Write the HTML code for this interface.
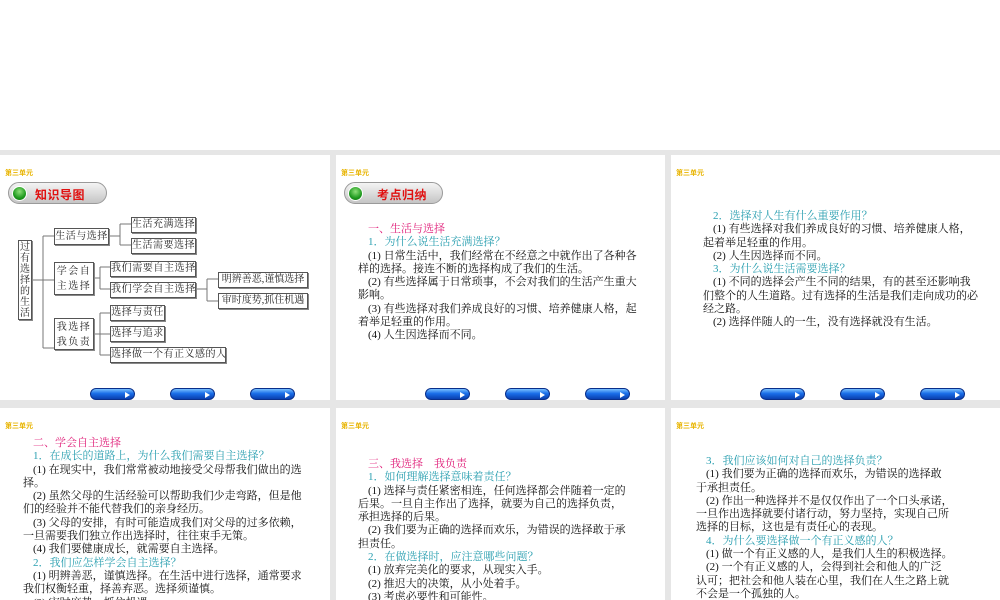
<!DOCTYPE html>
<html><head><meta charset="utf-8"><style>
*{margin:0;padding:0;box-sizing:border-box}
body{width:1000px;height:600px;background:#e6e6e6;position:relative;overflow:hidden;font-family:"Liberation Serif","Noto Serif CJK SC",serif}
.top{position:absolute;left:0;top:0;width:1000px;height:150px;background:#fff}
.s{position:absolute;background:#fff;overflow:hidden}
.u{position:absolute;left:5px;top:13px;font-size:7px;color:#e8b400;font-family:"Liberation Sans","Noto Sans CJK SC",sans-serif;font-weight:bold}
.pill{position:absolute;left:8px;top:27px;width:99px;height:22px;border-radius:11px;border:1px solid #9a9a9a;background:linear-gradient(#f4f4f4,#d8d8d8 60%,#c4c4c4)}
.pill i{position:absolute;left:3px;top:3px;width:15px;height:15px;border-radius:50%;background:radial-gradient(circle at 50% 35%,#8fe07a,#1f9a1f 60%,#0b6a0b);border:1px solid #fff}
.pill b{position:absolute;left:26px;top:3px;font-size:12px;color:#e01010;font-family:"Liberation Sans","Noto Sans CJK SC",sans-serif;letter-spacing:0.5px}
.btn{position:absolute;top:233px;width:45px;height:12px;border-radius:6px;background:linear-gradient(#7ac0ff,#1a6ee8 45%,#0a3fae);border:1px solid #0a2f8a}
.btn:after{content:"";position:absolute;right:4px;top:3px;border-left:5px solid #fff;border-top:3px solid transparent;border-bottom:3px solid transparent}
.t{position:absolute;font-size:11px;line-height:13.3px;color:#111;white-space:nowrap}
.pk{color:#e0207a}.tl{color:#2a9fb0}
.in{padding-left:10px}
.bx{position:absolute;border:1px solid #555;font-size:10px;line-height:14px;color:#222;text-align:center;white-space:nowrap;box-shadow:1px 1px 0 #888;letter-spacing:0.5px;background:#fff;overflow:hidden}
</style></head><body>
<div class="top"></div>

<!-- slide 1 -->
<div class="s" style="left:0;top:155px;width:330px;height:245px">
<div class="u">第三单元</div>
<div class="pill"><i></i><b>知识导图</b></div>
<svg style="position:absolute;left:0;top:0" width="330" height="245" stroke="#777" fill="none" stroke-width="1">
<path d="M32 125H43M43 81V193M43 81H54M43 125H54M43 193H54"/>
<path d="M109 81H120M120 69V90M120 69H131M120 90H131"/>
<path d="M94 123H100M100 112V134M100 112H110M100 134H110"/>
<path d="M196 134H207M207 124V146M207 124H218M207 146H218"/>
<path d="M94 179H100M100 158V200M100 158H110M100 179H110M100 200H110"/>
</svg>
<div class="bx" style="left:18px;top:85px;width:14px;height:80px;line-height:11px;letter-spacing:0;padding-top:1px">过<br>有<br>选<br>择<br>的<br>生<br>活</div>
<div class="bx" style="left:54px;top:73px;width:55px;height:17px;line-height:15px">生活与选择</div>
<div class="bx" style="left:131px;top:62px;width:65px;height:16px">生活充满选择</div>
<div class="bx" style="left:131px;top:83px;width:65px;height:16px">生活需要选择</div>
<div class="bx" style="left:54px;top:107px;width:40px;height:33px;line-height:15px;padding-top:1px;letter-spacing:1.5px">学会自<br>主选择</div>
<div class="bx" style="left:110px;top:106px;width:86px;height:16px;letter-spacing:0.6px">我们需要自主选择</div>
<div class="bx" style="left:110px;top:127px;width:86px;height:16px;letter-spacing:0.6px">我们学会自主选择</div>
<div class="bx" style="left:218px;top:117px;width:90px;height:16px;letter-spacing:0">明辨善恶,谨慎选择</div>
<div class="bx" style="left:218px;top:138px;width:90px;height:16px;letter-spacing:0">审时度势,抓住机遇</div>
<div class="bx" style="left:54px;top:163px;width:40px;height:32px;line-height:15px;padding-top:1px;letter-spacing:1.5px">我选择<br>我负责</div>
<div class="bx" style="left:110px;top:150px;width:55px;height:16px">选择与责任</div>
<div class="bx" style="left:110px;top:171px;width:55px;height:16px">选择与追求</div>
<div class="bx" style="left:110px;top:192px;width:116px;height:16px">选择做一个有正义感的人</div>
<div class="btn" style="left:90px"></div><div class="btn" style="left:170px"></div><div class="btn" style="left:250px"></div>
</div>

<!-- slide 2 -->
<div class="s" style="left:336px;top:155px;width:329px;height:245px">
<div class="u">第三单元</div>
<div class="pill"><i></i><b style="left:32px">考点归纳</b></div>
<div class="t" style="left:22px;top:68px">
<div class="in pk">一、生活与选择</div>
<div class="in tl">1．为什么说生活充满选择？</div>
<div class="in">(1) 日常生活中，我们经常在不经意之中就作出了各种各</div>
<div>样的选择。接连不断的选择构成了我们的生活。</div>
<div class="in">(2) 有些选择属于日常琐事，不会对我们的生活产生重大</div>
<div>影响。</div>
<div class="in">(3) 有些选择对我们养成良好的习惯、培养健康人格，起</div>
<div>着举足轻重的作用。</div>
<div class="in">(4) 人生因选择而不同。</div>
</div>
<div class="btn" style="left:89px"></div><div class="btn" style="left:169px"></div><div class="btn" style="left:249px"></div>
</div>

<!-- slide 3 -->
<div class="s" style="left:671px;top:155px;width:329px;height:245px">
<div class="u">第三单元</div>
<div class="t" style="left:32px;top:55px">
<div class="in tl">2．选择对人生有什么重要作用？</div>
<div class="in">(1) 有些选择对我们养成良好的习惯、培养健康人格，</div>
<div>起着举足轻重的作用。</div>
<div class="in">(2) 人生因选择而不同。</div>
<div class="in tl">3．为什么说生活需要选择？</div>
<div class="in">(1) 不同的选择会产生不同的结果，有的甚至还影响我</div>
<div>们整个的人生道路。过有选择的生活是我们走向成功的必</div>
<div>经之路。</div>
<div class="in">(2) 选择伴随人的一生，没有选择就没有生活。</div>
</div>
<div class="btn" style="left:89px"></div><div class="btn" style="left:169px"></div><div class="btn" style="left:249px"></div>
</div>

<!-- slide 4 -->
<div class="s" style="left:0;top:408px;width:330px;height:192px">
<div class="u">第三单元</div>
<div class="t" style="left:23px;top:29px">
<div class="in pk">二、学会自主选择</div>
<div class="in tl">1．在成长的道路上，为什么我们需要自主选择？</div>
<div class="in">(1) 在现实中，我们常常被动地接受父母帮我们做出的选</div>
<div>择。</div>
<div class="in">(2) 虽然父母的生活经验可以帮助我们少走弯路，但是他</div>
<div>们的经验并不能代替我们的亲身经历。</div>
<div class="in">(3) 父母的安排，有时可能造成我们对父母的过多依赖，</div>
<div>一旦需要我们独立作出选择时，往往束手无策。</div>
<div class="in">(4) 我们要健康成长，就需要自主选择。</div>
<div class="in tl">2．我们应怎样学会自主选择？</div>
<div class="in">(1) 明辨善恶，谨慎选择。在生活中进行选择，通常要求</div>
<div>我们权衡轻重，择善弃恶。选择须谨慎。</div>
<div class="in">(2) 审时度势，抓住机遇。</div>
</div>
</div>

<!-- slide 5 -->
<div class="s" style="left:336px;top:408px;width:329px;height:192px">
<div class="u">第三单元</div>
<div class="t" style="left:22px;top:50px">
<div class="in pk">三、我选择　我负责</div>
<div class="in tl">1．如何理解选择意味着责任？</div>
<div class="in">(1) 选择与责任紧密相连，任何选择都会伴随着一定的</div>
<div>后果。一旦自主作出了选择，就要为自己的选择负责，</div>
<div>承担选择的后果。</div>
<div class="in">(2) 我们要为正确的选择而欢乐，为错误的选择敢于承</div>
<div>担责任。</div>
<div class="in tl">2．在做选择时，应注意哪些问题？</div>
<div class="in">(1) 放弃完美化的要求，从现实入手。</div>
<div class="in">(2) 推迟大的决策，从小处着手。</div>
<div class="in">(3) 考虑必要性和可能性。</div>
</div>
</div>

<!-- slide 6 -->
<div class="s" style="left:671px;top:408px;width:329px;height:192px">
<div class="u">第三单元</div>
<div class="t" style="left:25px;top:47px">
<div class="in tl">3．我们应该如何对自己的选择负责？</div>
<div class="in">(1) 我们要为正确的选择而欢乐，为错误的选择敢</div>
<div>于承担责任。</div>
<div class="in">(2) 作出一种选择并不是仅仅作出了一个口头承诺，</div>
<div>一旦作出选择就要付诸行动，努力坚持，实现自己所</div>
<div>选择的目标，这也是有责任心的表现。</div>
<div class="in tl">4．为什么要选择做一个有正义感的人？</div>
<div class="in">(1) 做一个有正义感的人，是我们人生的积极选择。</div>
<div class="in">(2) 一个有正义感的人，会得到社会和他人的广泛</div>
<div>认可；把社会和他人装在心里，我们在人生之路上就</div>
<div>不会是一个孤独的人。</div>
</div>
</div>
</body></html>
